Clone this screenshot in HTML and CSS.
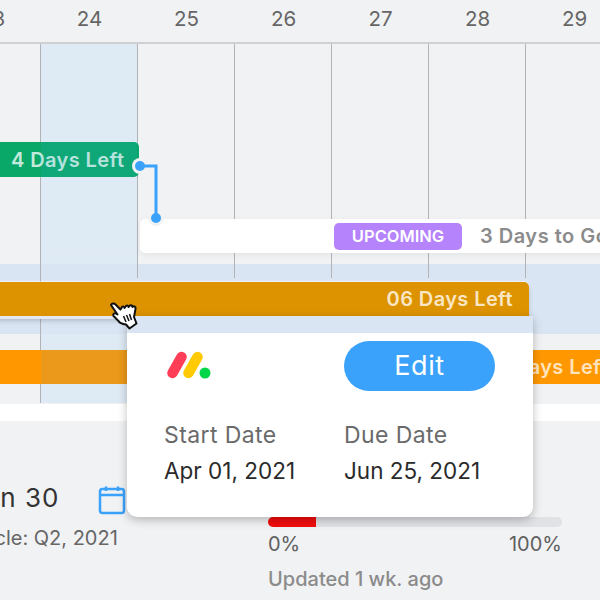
FILE: index.html
```html
<!DOCTYPE html>
<html lang="en">
<head>
    <meta charset="UTF-8">
    <meta name="viewport" content="width=device-width, initial-scale=1.0">
    <title>Timeline</title>
    <link rel="stylesheet" href="styles.css">
</head>
<body>
    <div class="stage">
        <div class="days">
            <span class="day">23</span>
            <span class="day">24</span>
            <span class="day">25</span>
            <span class="day">26</span>
            <span class="day">27</span>
            <span class="day">28</span>
            <span class="day">29</span>
        </div>

        <div class="chart">
            <div class="band"></div>
            <div class="columns">
                <div class="column"></div>
                <div class="column"></div>
                <div class="column"></div>
                <div class="column"></div>
                <div class="column"></div>
                <div class="column"></div>
            </div>

            <div class="bar bar-green">4 Days Left</div>
            <div class="bar bar-orange">5 Days Left</div>
            <div class="highlight"></div>

            <div class="task-row">
                <span class="badge">UPCOMING</span>
                <span class="task-note">3 Days to Go</span>
            </div>

            <svg class="connector" width="40" height="80" viewBox="0 0 40 80">
                <circle cx="11" cy="16" r="8" fill="#f1f2f4"/>
                <circle cx="27" cy="68" r="8" fill="#f1f2f4"/>
                <path d="M11 16H27V68" fill="none" stroke="#3aa2fb" stroke-width="3"/>
                <circle cx="11" cy="16" r="5" fill="#3aa2fb"/>
                <circle cx="27" cy="68" r="5" fill="#3aa2fb"/>
            </svg>

            <div class="bar bar-amber">06 Days Left</div>
        </div>

        <div class="white-strip"></div>

        <div class="summary">
            <div class="when">
                <div class="when-date">Jun 30</div>
                <div class="when-cycle">Cycle: Q2, 2021</div>
            </div>
            <svg class="calendar" width="28" height="30" viewBox="0 0 28 30">
                <rect x="2" y="4" width="24" height="24" rx="2.5" fill="none" stroke="#3aa2fb" stroke-width="2.5"/>
                <path d="M2 10H26M8 1.500V6M20 1.500V6" fill="none" stroke="#3aa2fb" stroke-width="2.500"/>
            </svg>
            <div class="progress">
                <div class="track"><div class="fill" style="width: 16.3%"></div></div>
                <div class="scale"><span>0%</span><span>100%</span></div>
                <div class="updated">Updated 1 wk. ago</div>
            </div>
        </div>

        <div class="popover">
            <div class="popover-top"></div>
            <div class="popover-body">
                <svg class="logo" width="46" height="30" viewBox="0 0 46 30">
                    <path d="M7.500 23L16.500 7" stroke="#ff3d57" stroke-width="10.500" stroke-linecap="round"/>
                    <path d="M23.500 23L32.500 7" stroke="#ffcb00" stroke-width="10.500" stroke-linecap="round"/>
                    <circle cx="40" cy="23" r="5.500" fill="#00d647"/>
                </svg>
                <button class="edit-btn">Edit</button>
                <div class="field">
                    <div class="field-label">Start Date</div>
                    <div class="field-value">Apr 01, 2021</div>
                </div>
                <div class="field">
                    <div class="field-label">Due Date</div>
                    <div class="field-value">Jun 25, 2021</div>
                </div>
            </div>
        </div>

        <svg class="cursor" width="30" height="28" viewBox="0 0 30 28">
            <path d="M2 3C3 1 5 1 6.500 2.500L11.500 7.500L13 5C14 4 15.500 4.500 15.500 6L17 4C18 3 19.500 3.500 19.500 5L21 3.500C22 3 23.500 3.500 23.500 5L24 4.500C25.500 4 27 5 26.500 7L25 15L27.500 21.500L20.500 26.500L17 22.500C13.500 22 10.500 21 9.500 19L4.500 14C3.500 12.500 5 10.500 7 11.500L8.500 12.500Z" fill="#fff" stroke="#111" stroke-width="2" stroke-linejoin="round"/>
            <path d="M14.500 14L17 20M17.500 13L20 19M20.500 12L22.500 18" fill="none" stroke="#111" stroke-width="1.500"/>
        </svg>
    </div>
</body>
</html>
```

FILE: styles.css
```css
* {
    box-sizing: border-box;
}
body {
    margin: 0;
    font-family: 'Inter', 'Noto Sans', sans-serif;
    background-color: #f1f2f4;
}
.stage {
    position: relative;
    width: 600px;
    height: 600px;
    overflow: hidden;
    background-color: #f1f2f4;
}
.days {
    display: flex;
    height: 44px;
    margin-left: -56px;
    width: 680px;
    border-bottom: 2px solid #cfd0d3;
}
.day {
    width: 97px;
    padding-top: 5px;
    text-align: center;
    font-size: 20.5px;
    line-height: 27px;
    color: #666;
}
.chart {
    position: relative;
    height: 360px;
}
.band {
    position: absolute;
    top: 220px;
    left: 0;
    right: 0;
    height: 70px;
    background-color: #dae5f3;
}
.columns {
    position: absolute;
    top: 0;
    left: 40px;
    display: flex;
}
.column {
    width: 97px;
    height: 234px;
    border-left: 1px solid #b1b3b6;
}
.column:first-child {
    height: 359px;
}
.highlight {
    position: absolute;
    top: 0;
    left: 41px;
    width: 96px;
    height: 359px;
    /* the row band shows through unchanged */
    background: linear-gradient(to bottom,
        rgba(58, 162, 251, 0.1) 220px,
        transparent 220px,
        transparent 290px,
        rgba(58, 162, 251, 0.1) 290px);
}
.bar {
    position: absolute;
    display: flex;
    align-items: center;
    height: 34px;
    left: -10px;
    border-radius: 5px;
    font-size: 20px;
    font-weight: 600;
    letter-spacing: 0.4px;
}
.bar-green {
    top: 98px;
    width: 149px;
    height: 35px;
    padding-left: 21px;
    background-color: #0aa868;
    color: #c3eadb;
}
.bar-orange {
    top: 306px;
    width: 630px;
    justify-content: flex-end;
    padding-right: 12px;
    border-radius: 0;
    background-color: #ff9800;
    color: #ffe3bd;
}
.bar-amber {
    top: 238px;
    width: 539px;
    justify-content: flex-end;
    padding-right: 16px;
    border-radius: 5px 5px 0 0;
    background-color: #dd9300;
    color: #f9e6c4;
    box-shadow: 0 -1px 0 rgba(255, 255, 255, 0.5), 0 3px 0 #e3e8f1, 0 5px 5px rgba(0, 0, 0, 0.18);
}
.task-row {
    position: absolute;
    top: 175px;
    left: 140px;
    right: -20px;
    height: 34px;
    display: flex;
    align-items: center;
    padding-left: 194px;
    background-color: white;
    border-radius: 5px;
    box-shadow: 0 2px 6px rgba(0, 0, 0, 0.06);
}
.badge {
    width: 128px;
    height: 27px;
    line-height: 27px;
    text-align: center;
    font-size: 16.5px;
    font-weight: 600;
    color: white;
    background-color: #b583fc;
    border-radius: 5px;
}
.task-note {
    margin-left: 18px;
    font-size: 20px;
    font-weight: 600;
    letter-spacing: 0.5px;
    color: #8b8b8b;
    white-space: nowrap;
}
.connector {
    position: absolute;
    top: 106px;
    left: 129px;
}
.white-strip {
    height: 17px;
    background-color: white;
}
.summary {
    display: flex;
    height: 179px;
}
.when {
    margin-left: -31px;
    width: 129px;
    padding-top: 62px;
    white-space: nowrap;
}
.when-date {
    margin-left: -1px;
    font-size: 26px;
    line-height: 30px;
    letter-spacing: 1px;
    color: #333;
}
.when-cycle {
    margin-top: 13px;
    font-size: 20px;
    line-height: 24px;
    color: #666;
}
.calendar {
    margin-top: 64px;
    flex-shrink: 0;
}
.progress {
    margin-left: 142px;
    width: 294px;
    padding-top: 96px;
}
.track {
    height: 10px;
    border-radius: 5px;
    overflow: hidden;
    background-color: #e0e2e6;
}
.fill {
    height: 100%;
    background-color: #f20d0d;
}
.scale {
    display: flex;
    justify-content: space-between;
    margin-top: 5px;
    font-size: 20px;
    line-height: 24px;
    color: #5f5f5f;
}
.updated {
    margin-top: 11px;
    font-size: 20px;
    line-height: 24px;
    font-weight: 500;
    color: #8b8b8b;
}
.popover {
    position: absolute;
    top: 316px;
    left: 127px;
    width: 406px;
    height: 201px;
    border-radius: 0 0 10px 10px;
    background-color: white;
    box-shadow: 0 3px 10px rgba(0, 0, 0, 0.25);
}
.popover-top {
    height: 17px;
    background-color: #dae5f3;
}
.popover-body {
    display: grid;
    grid-template-columns: 180px 1fr;
    padding-left: 37px;
    padding-top: 8px;
}
.logo {
    margin-top: 9px;
    margin-left: 1px;
}
.edit-btn {
    width: 151px;
    height: 50px;
    padding: 0 0 2px;
    border: none;
    border-radius: 25px;
    background-color: #3aa2fb;
    color: white;
    font-family: inherit;
    font-size: 27px;
    letter-spacing: 0.6px;
}
.field {
    margin-top: 29px;
}
.field-label {
    font-size: 23px;
    line-height: 30px;
    letter-spacing: 0.4px;
    color: #6a6a6a;
}
.field-value {
    margin-top: 6px;
    font-size: 22.5px;
    line-height: 30px;
    color: #2a2a2a;
    white-space: nowrap;
}
.cursor {
    position: absolute;
    top: 302px;
    left: 109px;
}
```
